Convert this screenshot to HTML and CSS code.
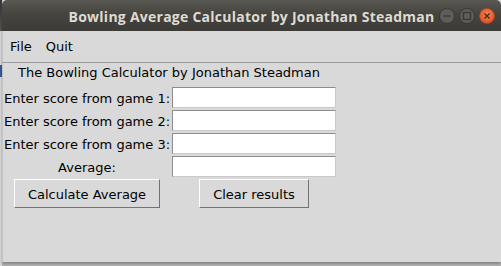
FILE: index.html
```html
<!DOCTYPE html>
<html>
<head>
<meta charset="utf-8">
<link rel="stylesheet" href="styles.css">
</head>
<body>
<div class="desk">
  <div class="strip"><div class="strip-top"></div><div class="strip-mark"></div></div>
  <div class="window">
    <div class="titlebar">
      <div class="spacer"></div>
      <div class="title">Bowling Average Calculator by Jonathan Steadman</div>
      <div class="controls">
        <span class="ctl">
          <svg width="16" height="16" viewBox="0 0 16 16"><circle cx="8" cy="8" r="7.5" class="ctl-bg"/><line x1="4.5" y1="8" x2="11.5" y2="8" class="ctl-sym"/></svg>
        </span>
        <span class="ctl">
          <svg width="16" height="16" viewBox="0 0 16 16"><circle cx="8" cy="8" r="7.5" class="ctl-bg"/><rect x="4.5" y="4.5" width="7" height="7" class="ctl-sym" fill="none"/></svg>
        </span>
        <span class="ctl">
          <svg width="16" height="16" viewBox="0 0 16 16"><defs><radialGradient id="og" cx="50%" cy="40%" r="60%"><stop offset="0" stop-color="#f5875a"/><stop offset="1" stop-color="#df4f1a"/></radialGradient></defs><circle cx="8" cy="8" r="7.5" fill="url(#og)" stroke="#b5451b" stroke-width="0.8"/><path d="M5.5 5.5 L10.5 10.5 M10.5 5.5 L5.5 10.5" class="ctl-x"/></svg>
        </span>
      </div>
    </div>
    <div class="menubar">
      <span class="menu-item first">File</span>
      <span class="menu-item">Quit</span>
    </div>
    <div class="form">
      <div class="heading">The Bowling Calculator by Jonathan Steadman</div>
      <div class="label">Enter score from game 1:</div>
      <div class="entry"></div>
      <div class="label">Enter score from game 2:</div>
      <div class="entry"></div>
      <div class="label">Enter score from game 3:</div>
      <div class="entry"></div>
      <div class="label">Average:</div>
      <div class="entry"></div>
      <div class="btn-cell"><div class="button">Calculate Average</div></div>
      <div class="btn-cell"><div class="button">Clear results</div></div>
    </div>
  </div>
</div>
</body>
</html>
```

FILE: styles.css
```css
* { box-sizing: border-box; }
html, body {
  margin: 0;
  padding: 0;
}
body {
  width: 501px;
  height: 266px;
  overflow: hidden;
  background: #c4c4c4;
  font-family: "DejaVu Sans", sans-serif;
  font-size: 13px;
  color: #000;
}
.desk {
  display: flex;
  height: 266px;
  background: linear-gradient(#cfcfcf, #b8b8b8);
}
.strip {
  width: 2px;
  display: flex;
  flex-direction: column;
  background: #dcdcdc;
}
.strip-top {
  height: 31px;
  background: linear-gradient(#3a3a3a, #555);
}
.strip-mark {
  margin-top: 34px;
  height: 12px;
  background: #3a5aa0;
}
.window {
  flex: 1;
  height: 262px;
  background: #d9d9d9;
  box-shadow: inset 1px 0 0 #c2c2c2, 0 2px 3px rgba(0,0,0,0.3);
  display: flex;
  flex-direction: column;
}
.titlebar {
  height: 31px;
  border-radius: 5px 5px 0 0;
  background: linear-gradient(#5a5853, #45443f 45%, #3c3b37);
  display: grid;
  grid-template-columns: 1fr auto 1fr;
  align-items: center;
}
.title {
  font-family: "Open Sans", sans-serif;
  font-weight: bold;
  font-size: 14px;
  color: #dfdbd2;
  letter-spacing: 0.25px;
  white-space: nowrap;
  padding-top: 1px;
}
.controls {
  justify-self: end;
  display: flex;
  gap: 4px;
  padding-right: 6px;
  padding-top: 1px;
}
.ctl {
  display: block;
  width: 16px;
  height: 16px;
}
.ctl svg { display: block; }
.ctl-bg {
  fill: #5f5d59;
  stroke: #333230;
  stroke-width: 0.8;
}
.ctl-sym {
  stroke: #3a3935;
  stroke-width: 1.4;
}
.ctl-x {
  stroke: #4a2a1c;
  stroke-width: 1.4;
  fill: none;
}
.menubar {
  height: 32px;
  border-bottom: 1px solid #9c9c9c;
  display: flex;
  align-items: center;
  padding-left: 8px;
}
.menu-item {
  padding: 0 7px 0 0;
  margin-right: 7px;
}
.form {
  display: grid;
  grid-template-columns: 170px 164px;
  grid-template-rows: 22px 21px 21px 21px 21px 29px;
  row-gap: 2px;
}
.form .heading {
  grid-column: 1 / span 2;
  text-align: center;
  line-height: 15px;
  padding-top: 2px;
  white-space: nowrap;
}
.label {
  display: flex;
  align-items: center;
  justify-content: center;
  white-space: nowrap;
  padding-top: 1px;
}
.entry {
  background: #fff;
  border-top: 1px solid #8d8d8d;
  border-left: 1px solid #8d8d8d;
  border-right: 1px solid #c9c9c9;
  border-bottom: 1px solid #c9c9c9;
}
.btn-cell {
  display: flex;
  justify-content: center;
}
.button {
  height: 29px;
  display: flex;
  align-items: center;
  padding: 1px 13px 0 13px;
  border-top: 1px solid #ffffff;
  border-left: 1px solid #ffffff;
  border-right: 1px solid #737373;
  border-bottom: 1px solid #737373;
  white-space: nowrap;
}
```
